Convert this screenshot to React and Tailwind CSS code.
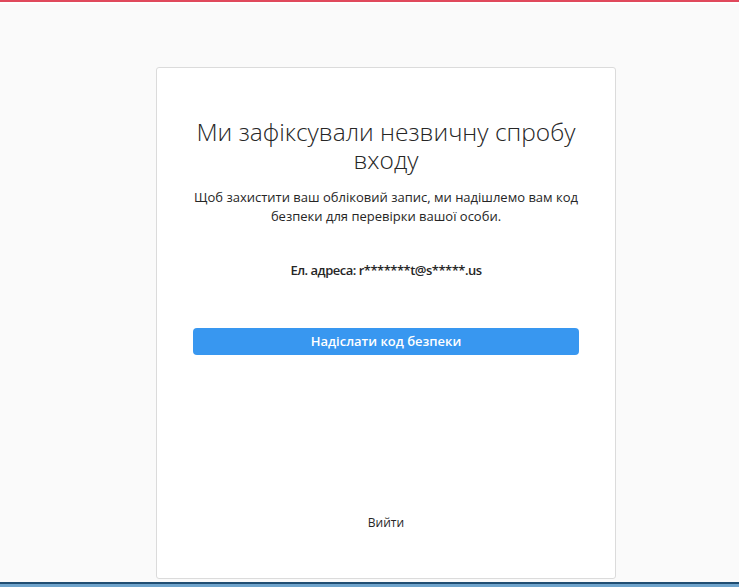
export default function App() {
  return (
    <div className="h-[587px] w-full flex flex-col bg-[#fafafa] overflow-hidden" style={{ fontFamily: '"Open Sans", "Noto Sans", sans-serif' }}>
      <div className="h-[2px] bg-[#e0495c] shrink-0" />
      <div className="h-[2px] bg-white shrink-0" />
      <div className="flex-1 flex justify-start pl-[156px] pt-[63px]">
        <div className="w-[460px] h-[512px] bg-white border border-[#dbdbdb] rounded-[3px] flex flex-col items-center px-[36px] pt-[50px] pb-[47px]">
          <h1 className="flex flex-col items-center text-[24.5px] leading-[28px] font-light text-[#262626] text-center whitespace-nowrap">
            <span className="block">Ми зафіксували незвичну спробу</span>
            <span className="block">входу</span>
          </h1>
          <p className="mt-[14px] text-[13px] leading-[19px] text-[#262626] text-center">
            Щоб захистити ваш обліковий запис, ми надішлемо вам код безпеки для перевірки вашої особи.
          </p>
          <p className="mt-[35px] text-[13px] leading-[18px] font-semibold text-[#262626] text-center tracking-[-0.5px]">
            Ел. адреса: r*******t@s*****.us
          </p>
          <button className="mt-[49px] w-full h-[27px] rounded-[4px] bg-[#3897f0] text-white text-[13px] font-semibold">
            Надіслати код безпеки
          </button>
          <div className="flex-1" />
          <a className="text-[12px] leading-[16px] text-[#262626]">Вийти</a>
        </div>
      </div>
      <div className="h-[2px] shrink-0 bg-[#1f4d72]" />
      <div className="h-[3px] shrink-0 bg-[#6ea3cb]" />
    </div>
  );
}
